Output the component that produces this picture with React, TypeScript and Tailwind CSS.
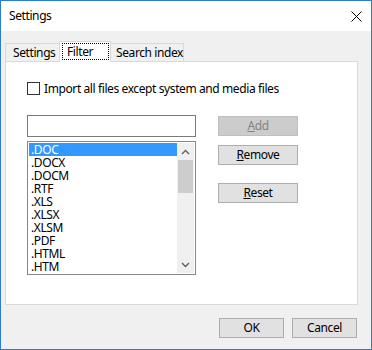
import React from 'react';

const extensions = ['.DOC', '.DOCX', '.DOCM', '.RTF', '.XLS', '.XLSX', '.XLSM', '.PDF', '.HTML', '.HTM'];

function WinButton({ children, disabled, className = '' }: { children: React.ReactNode; disabled?: boolean; className?: string }) {
  return (
    <div
      className={
        'h-[20px] flex items-center justify-center border ' +
        (disabled ? 'bg-[#cccccc] border-[#bfbfbf] text-[#838383] ' : 'bg-[#e1e1e1] border-[#adadad] text-black ') +
        className
      }
    >
      <span className="leading-[12px]">{children}</span>
    </div>
  );
}

function Chevron({ up }: { up?: boolean }) {
  return (
    <svg width="9" height="6" viewBox="0 0 9 6" fill="none">
      <path d={up ? 'M1 5 L4.5 1.5 L8 5' : 'M1 1 L4.5 4.5 L8 1'} stroke="#606060" strokeWidth="1.4" />
    </svg>
  );
}

export default function App() {
  return (
    <div className="w-[372px] h-[350px] border border-[#2b7cd3] bg-[#f0f0f0] flex flex-col font-['Noto_Sans',sans-serif] text-[12px] tracking-[-0.4px] text-black whitespace-nowrap">
      {/* title bar */}
      <div className="h-[30px] bg-white flex items-center justify-between pl-[8px] pr-[9px]">
        <span className="leading-[14px]">Settings</span>
        <svg width="11" height="11" viewBox="0 0 11 11">
          <path d="M0.5 0.5 L10.5 10.5 M10.5 0.5 L0.5 10.5" stroke="#000" strokeWidth="1" />
        </svg>
      </div>

      <div className="flex-1 flex flex-col px-[4px]">
        {/* tabs */}
        <div className="mt-[10px] h-[20px] flex items-end">
          <div className="h-[18px] w-[55px] border border-b-0 border-[#d9d9d9] bg-[#f0f0f0] pl-[7px] flex items-center">
            Settings
          </div>
          <div className="relative z-10 -ml-px -mb-px h-[21px] w-[52px] border border-b-0 border-[#d9d9d9] bg-white pt-px pl-[2px]">
            <div className="h-[17px] w-[47px] border border-dotted border-black pl-[4px] flex items-center">Filter</div>
          </div>
          <div className="-ml-px h-[18px] w-[74px] border border-b-0 border-[#d9d9d9] bg-[#f0f0f0] pl-[5px] flex items-center">
            Search index
          </div>
        </div>

        {/* panel */}
        <div className="h-[244px] w-[353px] border border-[#d9d9d9] bg-white pt-[20px] pl-[21px]">
          <div className="flex items-center h-[13px]">
            <div className="w-[13px] h-[13px] border border-[#333333] bg-white" />
            <span className="ml-[4px] leading-[13px]">Import all files except system and media files</span>
          </div>

          <div className="mt-[20px] flex">
            <div className="w-[169px] flex flex-col">
              <div className="h-[22px] border border-[#7a7a7a] bg-white" />
              <div className="mt-[4px] h-[134px] border border-[#828790] bg-white p-px flex">
                <div className="w-[148px] flex flex-col">
                  {extensions.map((ext, i) => (
                    <div
                      key={ext}
                      className={'h-[13px] leading-[13px] pl-[2px] ' + (i === 0 ? 'bg-[#3399ff] text-white' : '')}
                    >
                      {ext}
                    </div>
                  ))}
                </div>
                <div className="w-[17px] bg-[#f0f0f0] flex flex-col">
                  <div className="h-[17px] flex items-center justify-center">
                    <Chevron up />
                  </div>
                  <div className="h-[33px] mx-px bg-[#cdcdcd]" />
                  <div className="flex-1" />
                  <div className="h-[17px] flex items-center justify-center">
                    <Chevron />
                  </div>
                </div>
              </div>
            </div>

            <div className="ml-[22px] w-[80px] flex flex-col pt-px">
              <WinButton disabled>
                <u>A</u>dd
              </WinButton>
              <WinButton className="mt-[9px]">
                <u>R</u>emove
              </WinButton>
              <WinButton className="mt-[18px]">
                <u>R</u>eset
              </WinButton>
            </div>
          </div>
        </div>

        {/* footer */}
        <div className="mt-[13px] flex justify-end gap-[8px] pr-[10px]">
          <WinButton className="w-[65px]">OK</WinButton>
          <WinButton className="w-[65px]">Cancel</WinButton>
        </div>
      </div>
    </div>
  );
}
